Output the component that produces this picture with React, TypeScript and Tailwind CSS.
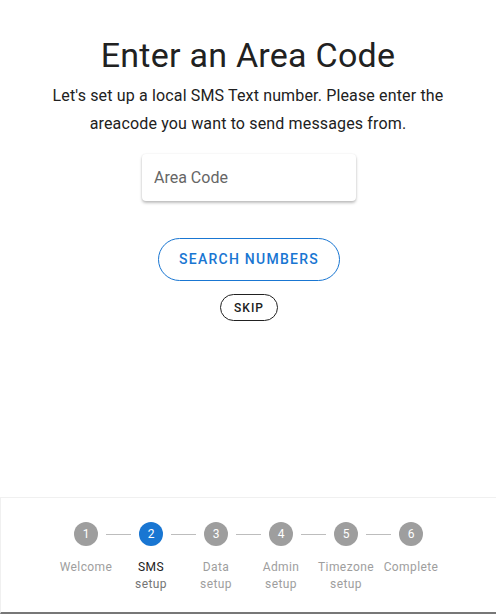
const steps = [
  { n: 1, label: ['Welcome'] },
  { n: 2, label: ['SMS', 'setup'] },
  { n: 3, label: ['Data', 'setup'] },
  { n: 4, label: ['Admin', 'setup'] },
  { n: 5, label: ['Timezone', 'setup'] },
  { n: 6, label: ['Complete'] },
]

const active = 2

function Stepper() {
  return (
    <div className="flex justify-center">
      {steps.map((s, i) => {
        const isActive = s.n === active
        return (
          <div key={s.n} className="flex w-[65px] flex-col items-center">
            <div className="flex w-full items-center">
              <div className={`mr-2 h-px flex-1 ${i === 0 ? '' : 'bg-[#bdbdbd]'}`} />
              <div
                className={`flex h-6 w-6 items-center justify-center rounded-full text-[12px] leading-none text-white ${
                  isActive ? 'bg-[#1976d2]' : 'bg-[#9e9e9e]'
                }`}
              >
                {s.n}
              </div>
              <div className={`ml-2 h-px flex-1 ${i === steps.length - 1 ? '' : 'bg-[#bdbdbd]'}`} />
            </div>
            <div
              className={`mt-[13px] text-center text-[12px] leading-[17px] tracking-[0.4px] ${
                isActive ? 'text-[#212121]' : 'text-[#9e9e9e]'
              }`}
            >
              {s.label.map((l, j) => (
                <div key={j} className={isActive && j > 0 ? 'text-[#757575]' : ''}>
                  {l}
                </div>
              ))}
            </div>
          </div>
        )
      })}
    </div>
  )
}

export default function App() {
  return (
    <div className="flex h-screen flex-col bg-white font-['Roboto',sans-serif] text-[#212121]">
      <main className="flex flex-1 flex-col items-center pt-[34px]">
        <h1 className="text-[34px] leading-[42px] font-normal tracking-[0.25px]">Enter an Area Code</h1>
        <p className="mt-[6px] w-[400px] text-center text-[16px] leading-[28px] tracking-[0.15px]">
          Let's set up a local SMS Text number. Please enter the areacode you want to send messages from.
        </p>
        <div className="ml-[2px] mt-[16px] w-[214px] rounded-[4px] bg-white shadow-[0_2px_3px_rgba(0,0,0,0.25),0_0_2px_rgba(0,0,0,0.08)]">
          <input
            placeholder="Area Code"
            className="h-[47px] w-full bg-transparent px-3 text-[16px] text-[#212121] outline-none placeholder:text-[#666]"
          />
        </div>
        <button className="ml-[2px] mt-[37px] h-[43px] w-[182px] rounded-full border border-[#1976d2] text-[14px] font-medium tracking-[1.25px] text-[#1976d2]">
          SEARCH NUMBERS
        </button>
        <button className="ml-[2px] mt-[13px] h-[27px] w-[58px] rounded-full border border-[#212121] text-[12px] font-medium tracking-[1px] text-[#212121]">
          SKIP
        </button>
      </main>
      <footer className="h-[117px] border-t border-l border-[#f0f0f0] border-b-2 border-b-[#777] pt-[24px]">
        <Stepper />
      </footer>
    </div>
  )
}
